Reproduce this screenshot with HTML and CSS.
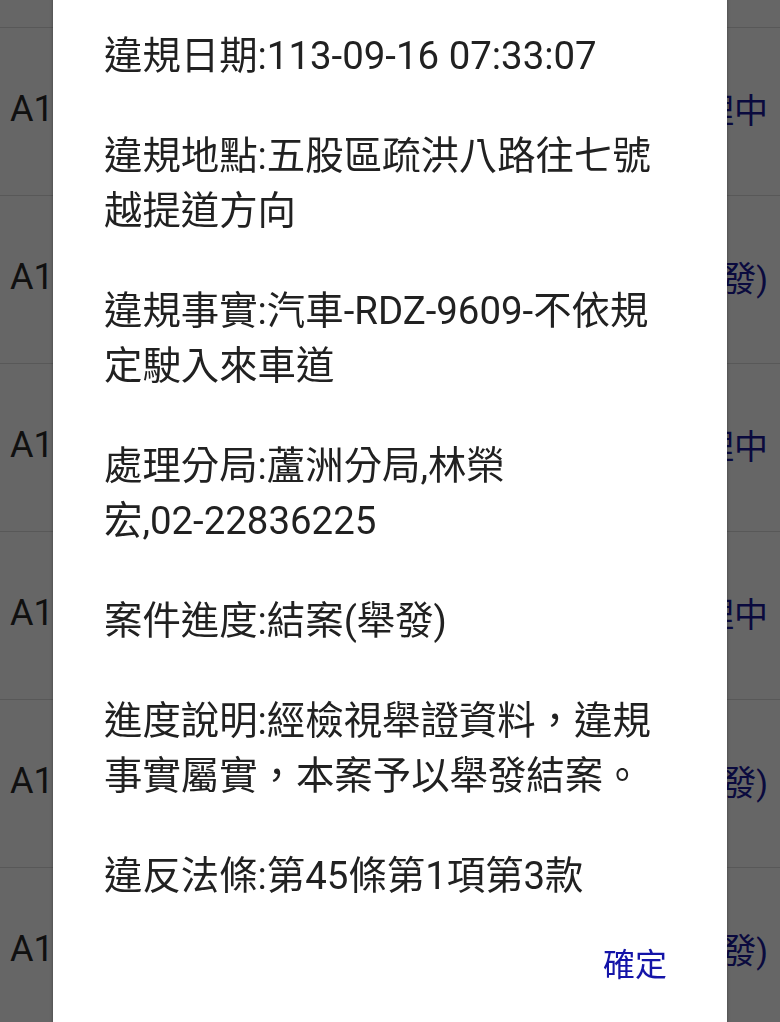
FILE: index.html
```html
<!DOCTYPE html>
<html lang="zh-Hant">
<head>
<meta charset="utf-8">
<title>違規查詢</title>
<link rel="stylesheet" href="styles.css">
</head>
<body>
<div class="list">
  <div class="row stub"></div>
  <div class="row"><span class="id">A1234567</span><span class="status"><span>處理中</span></span></div>
  <div class="row"><span class="id">A1234568</span><span class="status"><span>結案(舉發)</span></span></div>
  <div class="row"><span class="id">A1234569</span><span class="status"><span>處理中</span></span></div>
  <div class="row"><span class="id">A1234570</span><span class="status"><span>處理中</span></span></div>
  <div class="row"><span class="id">A1234571</span><span class="status"><span>結案(舉發)</span></span></div>
  <div class="row"><span class="id">A1234572</span><span class="status"><span>結案(舉發)</span></span></div>
</div>
<div class="scrim"></div>
<div class="dialog">
  <div class="content">
    <p>違規日期:113-09-16 07:33:07</p>
    <p>違規地點:五股區疏洪八路往七號<br>越提道方向</p>
    <p>違規事實:汽車-RDZ-9609-不依規<br>定駛入來車道</p>
    <p>處理分局:蘆洲分局,林榮<br>宏,02-22836225</p>
    <p>案件進度:結案(舉發)</p>
    <p>進度說明:經檢視舉證資料，違規<br>事實屬實，本案予以舉發結案。</p>
    <p>違反法條:第45條第1項第3款</p>
  </div>
  <div class="actions"><button class="ok" type="button">確定</button></div>
</div>
</body>
</html>
```
FILE: styles.css
```css
html, body {
  margin: 0;
  padding: 0;
  background: #ffffff;
  font-family: Roboto, "Noto Sans CJK TC", "Noto Sans", sans-serif;
  overflow: hidden;
}

.list {
  display: flex;
  flex-direction: column;
}

.row {
  box-sizing: border-box;
  height: 168px;
  border-bottom: 1px solid #dcdcdc;
  display: flex;
  align-items: center;
  justify-content: space-between;
  padding: 0 12px 6px 10px;
}

.row.stub {
  height: 28px;
  padding: 0;
}

.id {
  display: block;
  width: 43px;
  overflow: hidden;
  white-space: nowrap;
  font-size: 36px;
  color: #2a2a2a;
}

.status {
  display: flex;
  justify-content: flex-end;
  width: 41px;
  overflow: hidden;
  white-space: nowrap;
  font-size: 34px;
  color: #1a1a9c;
}

.status span {
  flex: none;
}

.scrim {
  position: fixed;
  inset: 0;
  background: rgba(0, 0, 0, 0.6);
}

.dialog {
  position: fixed;
  top: -10px;
  bottom: -10px;
  left: 53px;
  right: 53px;
  background: #ffffff;
  box-shadow: 0 0 3px rgba(0, 0, 0, 0.35);
  display: flex;
  flex-direction: column;
  padding: 38px 30px 0 51px;
  box-sizing: border-box;
}

.content {
  display: flex;
  flex-direction: column;
  gap: 45px;
}

.content p {
  margin: 0;
  font-size: 38.4px;
  line-height: 55px;
  color: #212121;
  white-space: nowrap;
}

.actions {
  display: flex;
  justify-content: flex-end;
  margin-top: 42px;
  padding-right: 30px;
}

.ok {
  border: 0;
  background: none;
  padding: 0;
  font-family: inherit;
  font-size: 32px;
  line-height: 40px;
  color: #1414a8;
}
```
